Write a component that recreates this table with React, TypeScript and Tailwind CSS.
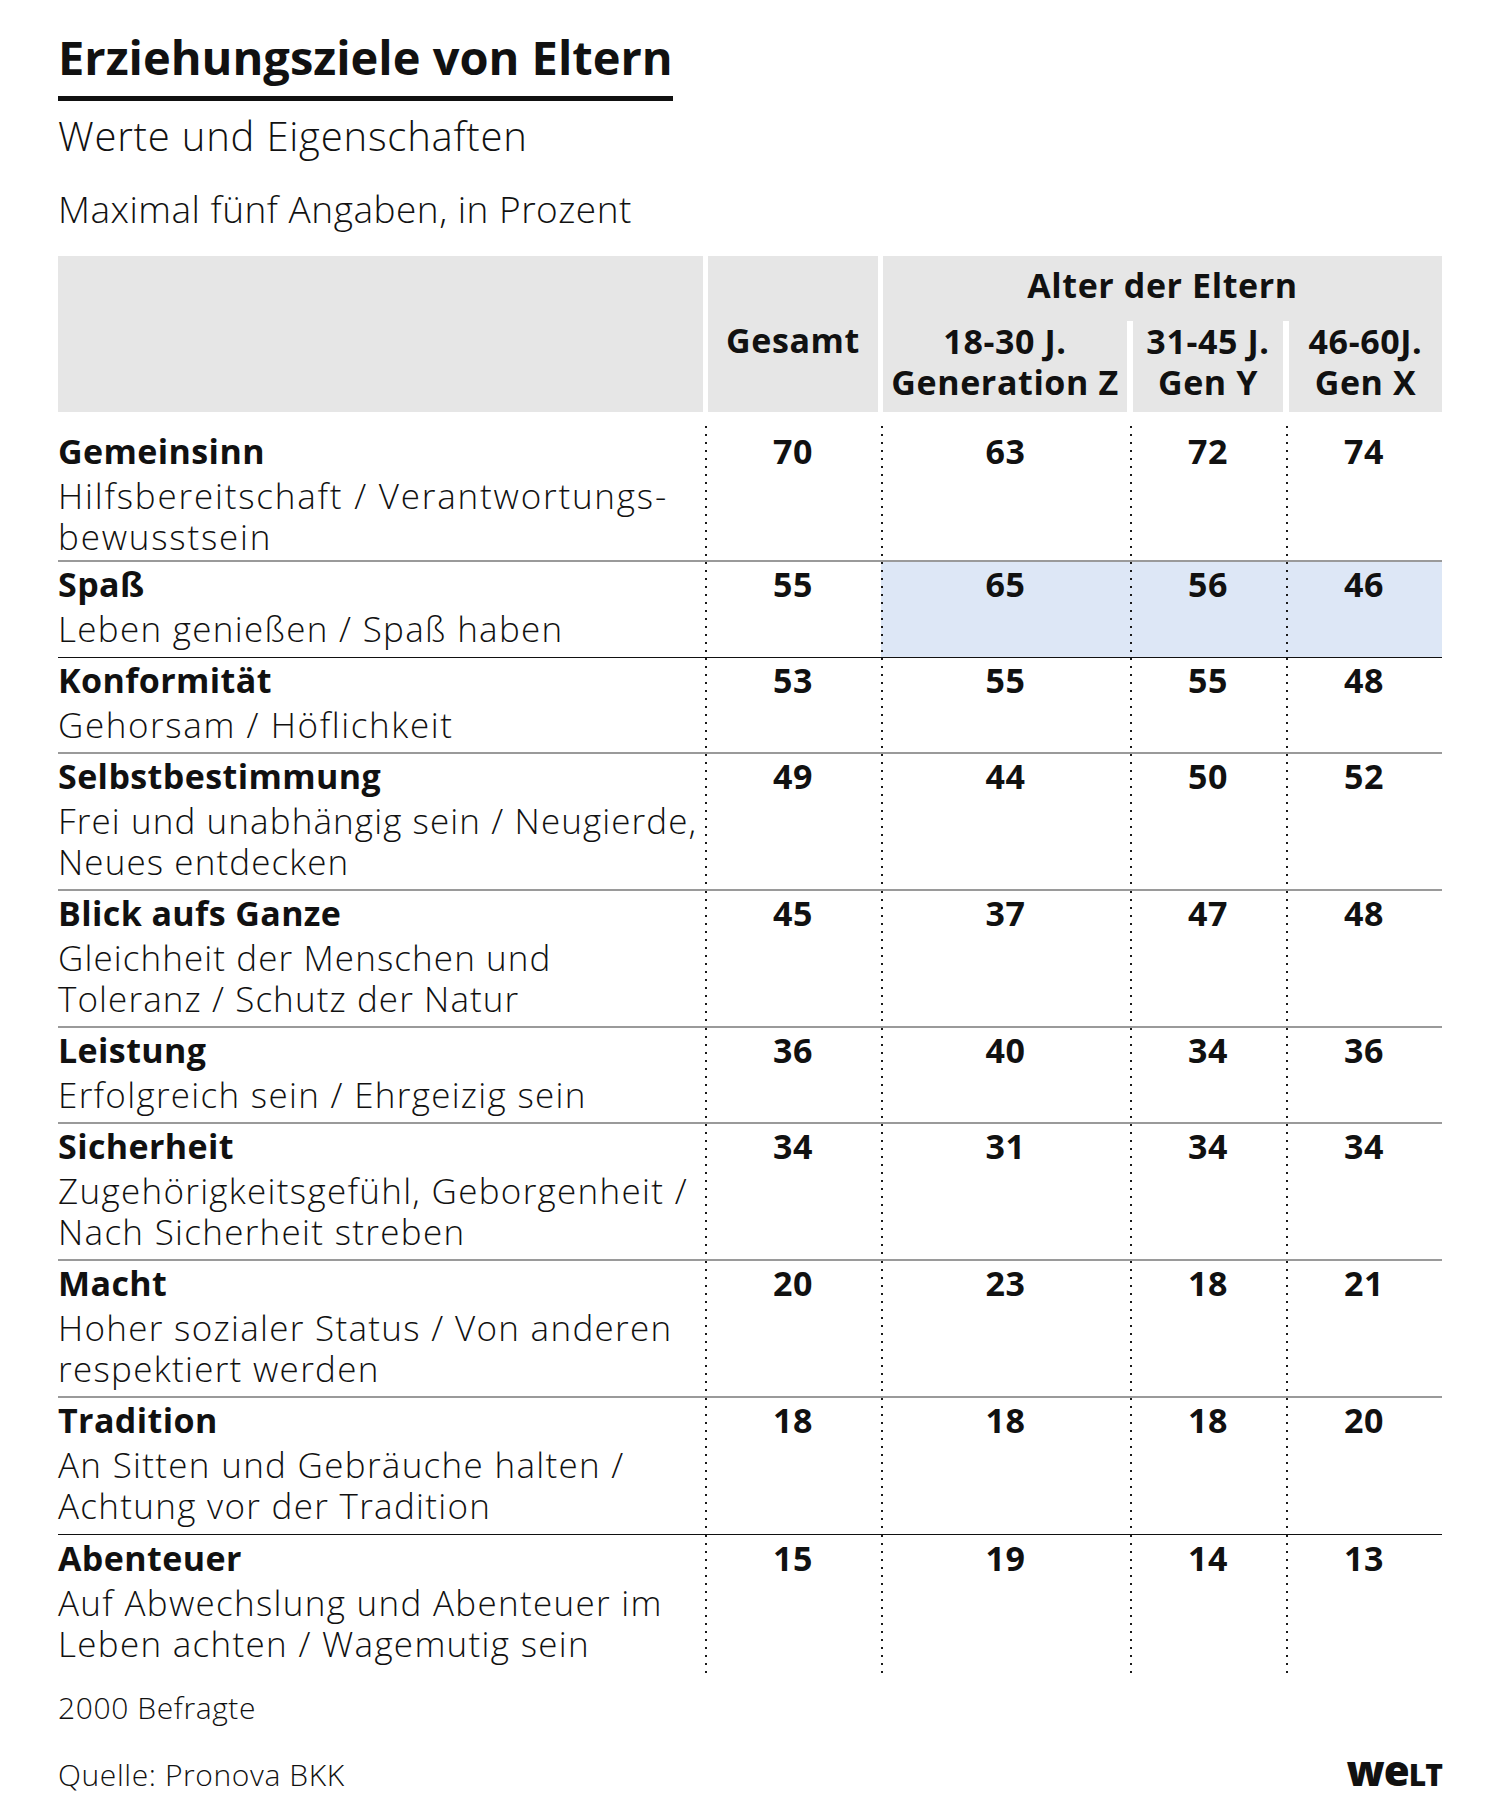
import React from "react";

type Row = {
    title: string;
    lines: string[];
    values: number[];
    highlight?: boolean;
    rule: "gray" | "black" | "none";
    track?: string;
};

const rows: Row[] = [
    {title: "Gemeinsinn", lines: ["Hilfsbereitschaft / Verantwortungs-", "bewusstsein"], values: [70, 63, 72, 74], rule: "gray", track: "tracking-[1.8px]"},
    {title: "Spaß", lines: ["Leben genießen / Spaß haben"], values: [55, 65, 56, 46], highlight: true, rule: "black"},
    {title: "Konformität", lines: ["Gehorsam / Höflichkeit"], values: [53, 55, 55, 48], rule: "gray", track: "tracking-[1.6px]"},
    {title: "Selbstbestimmung", lines: ["Frei und unabhängig sein / Neugierde,", "Neues entdecken"], values: [49, 44, 50, 52], rule: "gray", track: "tracking-[1.1px]"},
    {title: "Blick aufs Ganze", lines: ["Gleichheit der Menschen und", "Toleranz / Schutz der Natur"], values: [45, 37, 47, 48], rule: "gray", track: "tracking-[1.1px]"},
    {title: "Leistung", lines: ["Erfolgreich sein / Ehrgeizig sein"], values: [36, 40, 34, 36], rule: "gray"},
    {title: "Sicherheit", lines: ["Zugehörigkeitsgefühl, Geborgenheit /", "Nach Sicherheit streben"], values: [34, 31, 34, 34], rule: "gray"},
    {title: "Macht", lines: ["Hoher sozialer Status / Von anderen", "respektiert werden"], values: [20, 23, 18, 21], rule: "gray"},
    {title: "Tradition", lines: ["An Sitten und Gebräuche halten /", "Achtung vor der Tradition"], values: [18, 18, 18, 20], rule: "black"},
    {title: "Abenteuer", lines: ["Auf Abwechslung und Abenteuer im", "Leben achten / Wagemutig sein"], values: [15, 19, 14, 13], rule: "none"},
];

const valueCols = ["w-[176px]", "w-[249px]", "w-[156px]", "w-[156px]"];

// dotted column separator, drawn on the left edge of every value cell
const dots = "bg-[linear-gradient(to_bottom,#1a1a1a_2px,transparent_2px)] bg-[length:2px_8px] bg-repeat-y bg-left-top";

function TableRow({row, first, last}: {row: Row; first: boolean; last: boolean}) {
    const rule =
        row.rule === "gray" ? "border-b-2 border-[#9a9a9a]" :
        row.rule === "black" ? "border-b border-[#111111]" : "";
    let pad = row.rule === "black" ? "pt-[2px] pb-[8px]" : "pt-[2px] pb-[7px]";
    if (first) pad = "pt-[5px] pb-[3px]";
    if (last) pad = "pt-[3px] pb-[12px]";
    return (
        <div className={`flex ${rule}`}>
            <div className={`w-[647px] shrink-0 ${pad}`}>
                <div className="mb-[3px] text-[34px] tracking-[0.4px] font-bold">{row.title}</div>
                {row.lines.map((l) => (
                    <div key={l} className={`text-[35px] ${row.track ?? "tracking-[1.3px]"} font-light whitespace-nowrap`}>{l}</div>
                ))}
            </div>
            {row.values.map((v, i) => (
                <div key={i}
                     className={`${valueCols[i]} shrink-0 ${dots} ${row.highlight && i > 0 ? "bg-[#dde7f6]" : ""} ${pad} text-center text-[34px] tracking-[0.6px] font-bold`}>
                    {v}
                </div>
            ))}
        </div>
    );
}

export default function App() {
    return (
        <div className="w-[1499px] min-h-[1811px] bg-white text-[#111111] font-['Open_Sans',sans-serif]">
            <div className="pl-[58px] pt-[29px] w-[1442px]">
                <h1 className="text-[47px] leading-[56px] font-bold whitespace-nowrap">Erziehungsziele von Eltern</h1>
                <div className="mt-[11px] h-[5px] w-[615px] bg-[#111111]"/>
                <p className="mt-[12px] text-[40px] leading-[46px] tracking-[0.8px] font-light">Werte und Eigenschaften</p>
                <p className="mt-[28px] text-[37px] leading-[43px] tracking-[0.5px] font-light">Maximal fünf Angaben, in Prozent</p>

                <div className="mt-[26px] leading-[41px]">
                    <div className="flex h-[156px] gap-[5px] text-[34px] tracking-[0.6px] font-bold">
                        <div className="w-[645px] shrink-0 bg-[#e6e6e6]"/>
                        <div className="w-[170px] shrink-0 bg-[#e6e6e6] pt-[64px] text-center">Gesamt</div>
                        <div className="flex w-[559px] shrink-0 flex-col">
                            <div className="h-[65px] bg-[#e6e6e6] pt-[9px] text-center">Alter der Eltern</div>
                            <div className="flex flex-1 gap-[6px]">
                                <div className="w-[244px] bg-[#e6e6e6] text-center whitespace-nowrap">
                                    <div>18-30 J.</div>
                                    <div>Generation Z</div>
                                </div>
                                <div className="w-[150px] bg-[#e6e6e6] text-center whitespace-nowrap">
                                    <div>31-45 J.</div>
                                    <div>Gen Y</div>
                                </div>
                                <div className="w-[153px] bg-[#e6e6e6] text-center whitespace-nowrap">
                                    <div>46-60J.</div>
                                    <div>Gen X</div>
                                </div>
                            </div>
                        </div>
                    </div>

                    <div className="mt-[14px]">
                        {rows.map((r, i) => (
                            <TableRow key={r.title} row={r} first={i === 0} last={i === rows.length - 1}/>
                        ))}
                    </div>
                </div>

                <p className="mt-[14px] text-[30px] leading-[35px] tracking-[0.6px] font-light">2000 Befragte</p>
                <div className="mt-[24px] flex items-baseline justify-between">
                    <span className="text-[30px] leading-[35px] tracking-[0.6px] font-light">Quelle: Pronova BKK</span>
                    <span className="font-black leading-none tracking-[-1px]">
                        <span className="text-[42px]">we</span><span className="text-[30px]">LT</span>
                    </span>
                </div>
            </div>
        </div>
    );
}
